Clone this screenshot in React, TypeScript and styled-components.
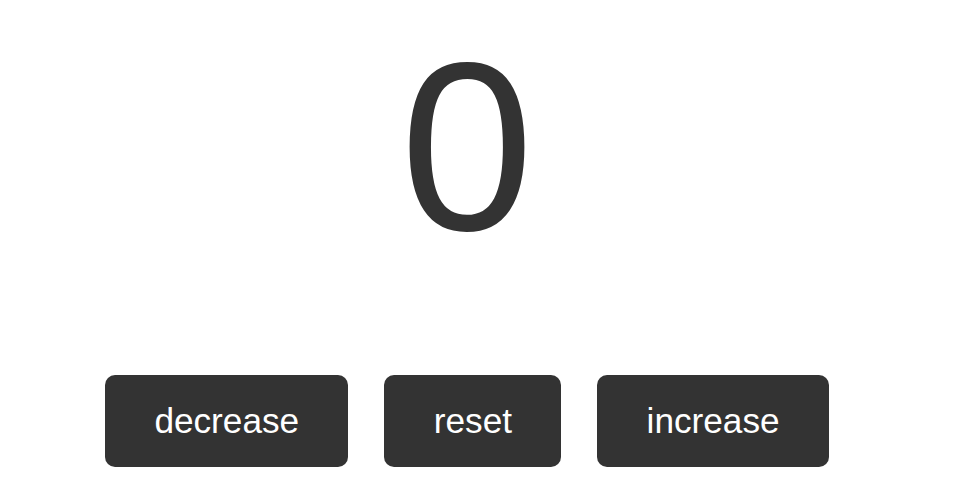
import React, { useState } from "react";
import styled, { createGlobalStyle } from "styled-components";

const GlobalStyle = createGlobalStyle`
  html, body {
    margin: 0;
    padding: 0;
    background: #ffffff;
  }
  body {
    font-family: "Liberation Sans", Arial, sans-serif;
  }
`;

const Page = styled.main`
  width: 934px;
  display: flex;
  flex-direction: column;
  align-items: center;
  padding-top: 9px;
`;

const Count = styled.h1`
  margin: 0;
  font-family: "Liberation Sans", Arial, sans-serif;
  font-weight: 400;
  font-size: 240px;
  line-height: normal;
  color: #333333;
`;

const Controls = styled.div`
  display: flex;
  gap: 36px;
  margin-top: 90px;
`;

const Button = styled.button`
  font-family: "Liberation Sans", Arial, sans-serif;
  font-size: 35.2px;
  line-height: normal;
  padding: 26px 49.3px;
  border: none;
  border-radius: 10px;
  background: #333333;
  color: #ffffff;
  cursor: pointer;
`;

export default function App() {
  const [count, setCount] = useState(0);
  return (
    <>
      <GlobalStyle />
      <Page>
        <Count>{count}</Count>
        <Controls>
          <Button onClick={() => setCount((c) => c - 1)}>decrease</Button>
          <Button onClick={() => setCount(0)}>reset</Button>
          <Button onClick={() => setCount((c) => c + 1)}>increase</Button>
        </Controls>
      </Page>
    </>
  );
}
